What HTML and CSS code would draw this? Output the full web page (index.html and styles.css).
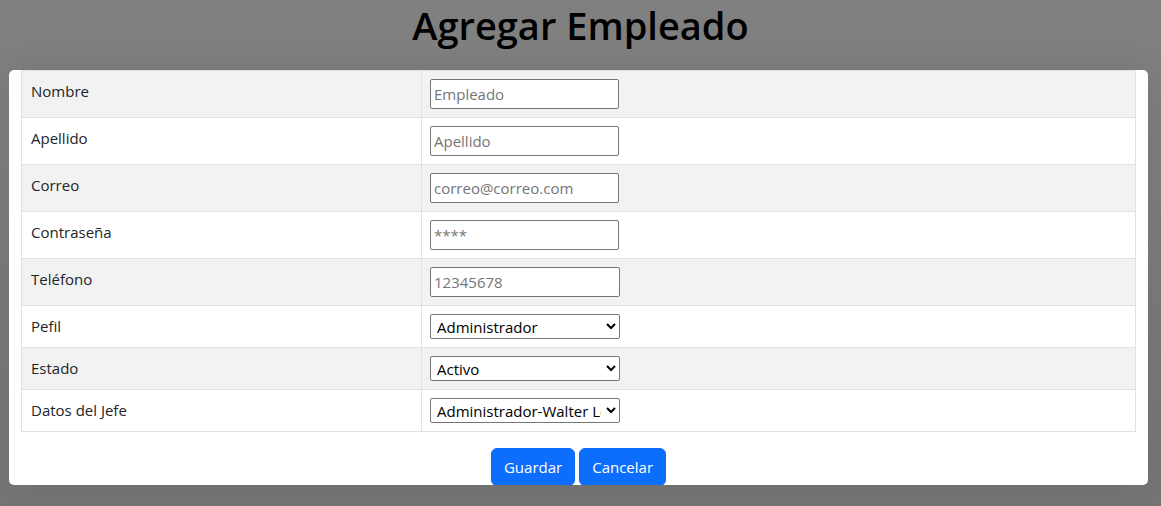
FILE: index.html
```html
<!DOCTYPE html>
<html lang="es">
<head>
<meta charset="utf-8">
<title>Agregar Empleado</title>
<link rel="stylesheet" href="styles.css">
</head>
<body>
<h1 class="title">Agregar Empleado</h1>
<div class="card">
  <table class="form-table">
    <tbody>
      <tr><td class="label">Nombre</td><td><input class="field" type="text" placeholder="Empleado"></td></tr>
      <tr><td class="label">Apellido</td><td><input class="field" type="text" placeholder="Apellido"></td></tr>
      <tr><td class="label">Correo</td><td><input class="field" type="text" placeholder="correo@correo.com"></td></tr>
      <tr><td class="label">Contraseña</td><td><input class="field" type="password" placeholder="****"></td></tr>
      <tr><td class="label">Teléfono</td><td><input class="field field-wide" type="text" placeholder="12345678"></td></tr>
      <tr><td class="label">Pefil</td><td><select class="pick"><option>Administrador</option></select></td></tr>
      <tr><td class="label">Estado</td><td><select class="pick"><option>Activo</option></select></td></tr>
      <tr><td class="label">Datos del Jefe</td><td><select class="pick"><option>Administrador-Walter Lopez</option></select></td></tr>
    </tbody>
  </table>
  <div class="actions">
    <button class="btn" type="button">Guardar</button>
    <button class="btn" type="button">Cancelar</button>
  </div>
</div>
</body>
</html>
```
FILE: styles.css
```css
html, body {
  margin: 0;
  padding: 0;
}
body {
  height: 506px;
  overflow: hidden;
  background: linear-gradient(#808080, #757575);
  font-family: "Open Sans", "Noto Sans", sans-serif;
  font-size: 15px;
  color: #212529;
}
.title {
  margin: 0;
  height: 70px;
  padding-top: 0;
  box-sizing: border-box;
  text-align: center;
  font-size: 38px;
  line-height: 50px;
  font-weight: 600;
  color: #000;
}
.card {
  margin-left: 9px;
  width: 1139px;
  height: 415px;
  box-sizing: border-box;
  padding: 0 12px;
  background: #fff;
  border-radius: 5px;
  overflow: hidden;
  box-shadow: 0 0 30px rgba(0,0,0,0.08);
}
.form-table {
  width: 100%;
  border-collapse: collapse;
}
.form-table td {
  border: 1px solid #dee2e6;
  padding: 8px;
  vertical-align: top;
  line-height: 24px;
}
.form-table td.label {
  width: 382px;
  padding-left: 9px;
}
.form-table tr:nth-child(odd) td {
  background: #f2f2f2;
}
.field {
  display: block;
  box-sizing: border-box;
  width: 189px;
  height: 30px;
  margin: 0;
  padding: 1px 3px;
  border: 1px solid #767676;
  border-radius: 2px;
  background: #fff;
  font-family: "Open Sans", "Noto Sans", sans-serif;
  font-size: 15px;
  color: #000;
}
.field-wide {
  width: 190px;
}
.field::placeholder {
  color: #757575;
}
.pick {
  display: block;
  box-sizing: border-box;
  width: 190px;
  height: 25px;
  margin: 0;
  padding: 0 2px;
  border: 1px solid #767676;
  border-radius: 2px;
  background: #fff;
  font-family: "Open Sans", "Noto Sans", sans-serif;
  font-size: 15px;
  color: #000;
}
.actions {
  display: flex;
  justify-content: center;
  gap: 4px;
  margin-top: 16px;
}
.btn {
  height: 38px;
  padding: 6px 12px;
  border: 1px solid #0d6efd;
  border-radius: 6px;
  background: #0d6efd;
  color: #fff;
  font-family: "Open Sans", "Noto Sans", sans-serif;
  font-size: 15px;
  line-height: 24px;
}
```
